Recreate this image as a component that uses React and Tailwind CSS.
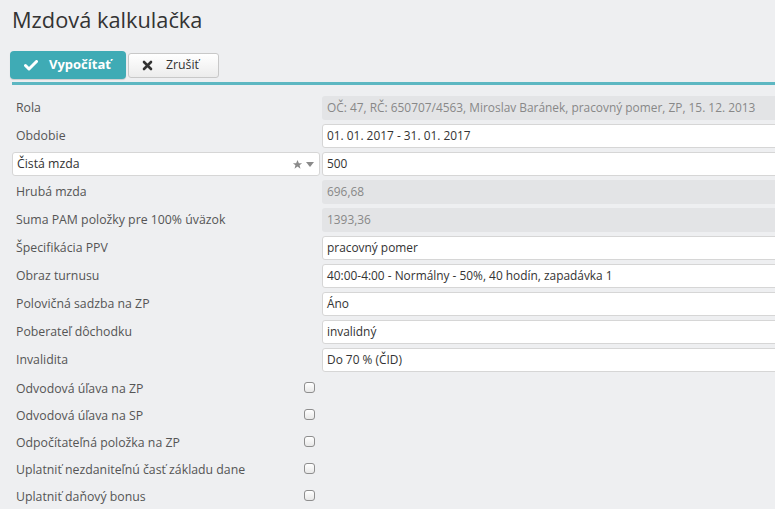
import React from "react";

const fields = [
  { label: "Rola", value: "OČ: 47, RČ: 650707/4563, Miroslav Baránek, pracovný pomer, ZP, 15. 12. 2013", readOnly: true },
  { label: "Obdobie", value: "01. 01. 2017 - 31. 01. 2017" },
  { label: "Čistá mzda", value: "500", select: true },
  { label: "Hrubá mzda", value: "696,68", readOnly: true },
  { label: "Suma PAM položky pre 100% úväzok", value: "1393,36", readOnly: true },
  { label: "Špecifikácia PPV", value: "pracovný pomer" },
  { label: "Obraz turnusu", value: "40:00-4:00 - Normálny - 50%, 40 hodín, zapadávka 1" },
  { label: "Polovičná sadzba na ZP", value: "Áno" },
  { label: "Poberateľ dôchodku", value: "invalidný" },
  { label: "Invalidita", value: "Do 70 % (ČID)" },
];

const checks = [
  "Odvodová úľava na ZP",
  "Odvodová úľava na SP",
  "Odpočítateľná položka na ZP",
  "Uplatniť nezdaniteľnú časť základu dane",
  "Uplatniť daňový bonus",
];

const App = () => {
  return (
    <div
      className="w-[775px] h-[509px] overflow-hidden bg-[#eeeff1] text-[12.3px] text-[#555]"
      style={{ fontFamily: '"Open Sans", sans-serif' }}
    >
      <h1 className="pl-3 pt-[6px] text-[21.8px] leading-[28px] text-[#333]">Mzdová kalkulačka</h1>

      <div className="flex items-center gap-[2px] pl-[10px] mt-[17px]">
        <button className="flex items-center h-[28px] w-[116px] rounded-[4px] bg-[#3fabb5] text-white font-bold text-[13px] pl-[14px] shadow-[0_1px_1px_rgba(0,0,0,0.15)]">
          <svg width="14" height="11" viewBox="0 0 14 11" className="mr-[11px]">
            <path d="M1.5 5.5 L5 9 L12.5 1.5" stroke="white" strokeWidth="3" fill="none" strokeLinecap="round" strokeLinejoin="round" />
          </svg>
          Vypočítať
        </button>
        <button className="flex items-center h-[25px] w-[91px] rounded-[3px] border border-[#c8c8c8] bg-gradient-to-b from-white to-[#ececec] text-[#333] text-[12.3px] pl-[13px]">
          <svg width="11" height="11" viewBox="0 0 11 11" className="mr-[13px]">
            <path d="M2 2 L9 9 M9 2 L2 9" stroke="#333" strokeWidth="2.6" strokeLinecap="round" />
          </svg>
          Zrušiť
        </button>
      </div>

      <div className="ml-3 mt-[3px] h-[3px] bg-[#5db7c2]" />

      <div className="pl-3 pt-[11px]">
        {fields.map((f) => (
          <div key={f.label} className="flex h-[28px] pb-[4px]">
            {f.select ? (
              <div className="w-[308px] flex items-center bg-white border border-[#d6d6d6] rounded-[3px] pl-[4px] pr-[5px] text-[#333]">
                <span className="flex-1">{f.label}</span>
                <svg width="11" height="11" viewBox="0 0 24 24" className="mr-[3px]">
                  <path d="M12 2l3 7h7l-5.5 4.5 2 7.5L12 16.5 5.5 21l2-7.5L2 9h7z" fill="#8a8a8a" />
                </svg>
                <svg width="8" height="5" viewBox="0 0 8 5">
                  <path d="M0 0h8L4 5z" fill="#8a8a8a" />
                </svg>
              </div>
            ) : (
              <div className="w-[308px] flex items-center pl-[4px]">{f.label}</div>
            )}
            <div
              className={
                f.readOnly
                  ? "ml-[2px] flex-1 -mr-2 flex items-center whitespace-nowrap rounded-[3px] bg-[#e3e4e6] pl-[5px] text-[11.9px] text-[#888]"
                  : "ml-[2px] flex-1 -mr-2 flex items-center whitespace-nowrap rounded-[3px] border border-[#d6d6d6] bg-white pl-[4px] text-[11.9px] text-[#333]"
              }
            >
              {f.value}
            </div>
          </div>
        ))}
        {checks.map((c) => (
          <div key={c} className="flex items-center h-[27px]">
            <div className="w-[292px] pl-[4px]">{c}</div>
            <input
              type="checkbox"
              className="appearance-none mb-[4px] w-[11px] h-[11px] rounded-[3px] border border-[#8e8e8e] bg-gradient-to-b from-white to-[#e8e8e8]"
            />
          </div>
        ))}
      </div>
    </div>
  );
};

export default App;
